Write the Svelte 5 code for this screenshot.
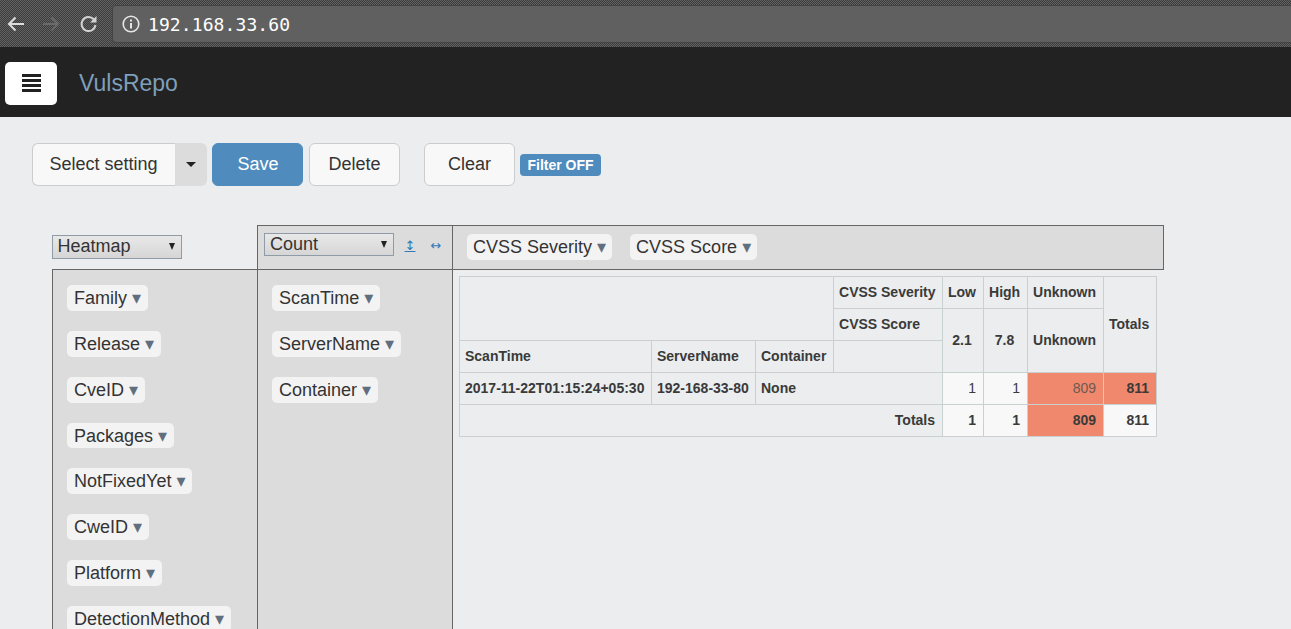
<script lang="ts">
  const unused = ['Family', 'Release', 'CveID', 'Packages', 'NotFixedYet', 'CweID', 'Platform', 'DetectionMethod'];
  const rowAttrs = ['ScanTime', 'ServerName', 'Container'];
  const colAttrs = ['CVSS Severity', 'CVSS Score'];
</script>

<div class="browser">
  <svg class="nav-icon" viewBox="0 0 20 20" width="20" height="20">
    <path d="M18 10H3M9.500 3.500 3 10l6.500 6.500" fill="none" stroke="#dedede" stroke-width="2" />
  </svg>
  <svg class="nav-icon forward" viewBox="0 0 20 20" width="20" height="20">
    <path d="M2 10h15M10.500 3.500 17 10l-6.500 6.500" fill="none" stroke="#6a6a6a" stroke-width="2" />
  </svg>
  <svg class="nav-icon reload" viewBox="0 0 20 20" width="20" height="20">
    <path d="M16.500 11a7 7 0 1 1-1.800-5.700" fill="none" stroke="#d2d2d2" stroke-width="2" />
    <path d="M17.500 2v6.500H11z" fill="#d2d2d2" />
  </svg>
  <div class="omnibox">
    <svg viewBox="0 0 18 18" width="18" height="18">
      <circle cx="9" cy="9" r="7.800" fill="none" stroke="#e6e6e6" stroke-width="1.600" />
      <path d="M8 8h2v5.500H8zM8 4.500h2v2H8z" fill="#e6e6e6" />
    </svg>
    <span class="url">192.168.33.60</span>
  </div>
</div>

<nav class="navbar">
  <button class="menu" aria-label="Menu">
    <svg viewBox="0 0 19 18" width="19" height="18">
      <path d="M0 0h19v3H0zM0 5h19v3H0zM0 10h19v3H0zM0 15h19v3H0z" fill="#222" />
    </svg>
  </button>
  <span class="brand">VulsRepo</span>
</nav>

<main>
  <div class="toolbar">
    <div class="split">
      <button class="btn setting">Select setting</button>
      <button class="caret-btn" aria-label="Open"><i class="caret"></i></button>
    </div>
    <button class="btn primary">Save</button>
    <button class="btn">Delete</button>
    <button class="btn clear">Clear</button>
    <span class="badge">Filter OFF</span>
  </div>

  <table class="pivot">
    <colgroup><col class="c1" /><col class="c2" /><col class="c3" /></colgroup>
    <tbody>
      <tr class="top">
        <td class="renderer">
          <div class="select heatmap">Heatmap<i class="tri"></i></div>
        </td>
        <td class="aggregator">
          <div class="agg-row">
            <div class="select count">Count<i class="tri"></i></div>
            <a class="order first" href="#r">↕</a>
            <a class="order" href="#c">↔</a>
          </div>
        </td>
        <td class="cols">
          <div class="col-row">
            {#each colAttrs as attr}
              <span class="chip inline">{attr} <em>▾</em></span>
            {/each}
          </div>
        </td>
      </tr>
      <tr>
        <td class="list">
          {#each unused as attr}
            <span class="chip">{attr} <em>▾</em></span>
          {/each}
        </td>
        <td class="list">
          {#each rowAttrs as attr}
            <span class="chip">{attr} <em>▾</em></span>
          {/each}
        </td>
        <td class="output">
          <table class="result">
            <colgroup>
              <col style="width:192px" /><col style="width:104px" /><col style="width:78px" />
              <col style="width:109px" /><col style="width:41px" /><col style="width:44px" />
              <col style="width:76px" /><col style="width:53px" />
            </colgroup>
            <thead>
              <tr>
                <th colspan="3" rowspan="2"></th>
                <th>CVSS Severity</th>
                <th class="mid">Low</th>
                <th class="mid">High</th>
                <th class="mid">Unknown</th>
                <th class="mid" rowspan="3">Totals</th>
              </tr>
              <tr>
                <th>CVSS Score</th>
                <th class="mid" rowspan="2">2.1</th>
                <th class="mid" rowspan="2">7.8</th>
                <th class="mid" rowspan="2">Unknown</th>
              </tr>
              <tr>
                <th>ScanTime</th>
                <th>ServerName</th>
                <th>Container</th>
                <th></th>
              </tr>
            </thead>
            <tbody>
              <tr>
                <th>2017-11-22T01:15:24+05:30</th>
                <th>192-168-33-80</th>
                <th colspan="2">None</th>
                <td>1</td>
                <td>1</td>
                <td class="hot faint">809</td>
                <td class="hot strong">811</td>
              </tr>
              <tr>
                <th class="total-label" colspan="4">Totals</th>
                <td class="strong">1</td>
                <td class="strong">1</td>
                <td class="hot strong">809</td>
                <td class="strong">811</td>
              </tr>
            </tbody>
          </table>
        </td>
      </tr>
    </tbody>
  </table>
</main>

<style>
  :global(body) {
    margin: 0;
    height: 629px;
    overflow: hidden;
    background: #ebedef;
    color: #333;
    font-family: "Liberation Sans", "DejaVu Sans", sans-serif;
  }

  .browser {
    display: flex;
    align-items: center;
    height: 47px;
    padding-left: 6px;
    box-sizing: border-box;
    background: repeating-conic-gradient(#3c3c3c 0 25%, #626262 0 50%) 0 0 / 2px 2px;
  }

  .nav-icon { flex: none; margin-right: 15px; }
  .reload { margin: 0 14px 0 3px; }

  .omnibox {
    flex: 1;
    display: flex;
    align-items: center;
    gap: 8px;
    height: 36px;
    padding-left: 9px;
    background: #606060;
    border-radius: 3px 0 0 3px;
    box-shadow: 0 0 0 1px #444;
    color: #fff;
    font: 18px "DejaVu Sans Mono", monospace;
  }

  .url {
    padding-top: 1px;
    letter-spacing: 0.1px;
  }

  .navbar {
    display: flex;
    align-items: center;
    height: 70px;
    padding-top: 2px;
    box-sizing: border-box;
    background: #222;
  }

  .menu {
    display: flex;
    align-items: center;
    justify-content: center;
    width: 52px;
    height: 43px;
    margin-left: 5px;
    padding: 0;
    border: 0;
    border-radius: 5px;
    background: #fff;
  }

  .brand {
    margin-left: 22px;
    font-size: 23px;
    color: #7f9fba;
  }

  .toolbar {
    display: flex;
    align-items: center;
    height: 43px;
    padding: 26px 0 0 32px;
  }

  .btn {
    width: 91px;
    height: 43px;
    padding: 0;
    margin-right: 6px;
    border: 1px solid #ccc;
    border-radius: 6px;
    background: #f8f8f8;
    color: #333;
    font: 18px "Liberation Sans", sans-serif;
  }

  .primary {
    padding-left: 1px;
    border-color: #4f8bbd;
    background: #4f8bbd;
    color: #fff;
  }

  .clear { margin: 0 5px 0 18px; }

  .split {
    display: flex;
    margin-right: 5px;
  }

  .setting {
    width: 143px;
    margin: 0;
    padding-right: 1px;
    border-right: 0;
    border-radius: 6px 0 0 6px;
  }

  .caret-btn {
    display: flex;
    align-items: center;
    justify-content: center;
    width: 32px;
    height: 43px;
    padding: 0;
    border: 0;
    border-radius: 0 6px 6px 0;
    background: #dcdcdc;
  }

  .caret {
    border-top: 5px solid #222;
    border-left: 5px solid transparent;
    border-right: 5px solid transparent;
  }

  .badge {
    width: 81px;
    height: 22px;
    border-radius: 4px;
    background: #4f8bbd;
    color: #fff;
    font-size: 14px;
    font-weight: 700;
    line-height: 22px;
    text-align: center;
  }

  .pivot {
    margin: 39px 0 0 52px;
    border-collapse: collapse;
    table-layout: fixed;
    width: 1111px;
    font-size: 18px;
  }

  .c1 { width: 205px; }
  .c2 { width: 195px; }
  .c3 { width: 711px; }

  .pivot > tbody > tr > td {
    padding: 0;
    vertical-align: top;
    border: 1px solid #666;
    background: #dcdcdc;
  }

  .pivot > tbody > tr.top > td { height: 44px; box-sizing: border-box; }

  .pivot > tbody > tr > td.renderer {
    border-width: 0 1px 1px 0;
    background: transparent;
    padding-top: 9px;
  }

  .pivot > tbody > tr > td.aggregator { padding: 7px 0 0 6px; }

  .pivot > tbody > tr > td.cols { padding: 8px 0 0 14px; }

  .pivot > tbody > tr > td.list { padding: 15px 0 0 14px; }

  .pivot > tbody > tr > td.output {
    padding: 6px 0 0 6px;
    border-width: 1px 0 0 1px;
    background: transparent;
  }

  .agg-row,
  .col-row {
    display: flex;
    align-items: flex-start;
  }

  .col-row { gap: 18px; }

  .select {
    position: relative;
    width: 130px;
    height: 24px;
    padding-left: 5px;
    box-sizing: border-box;
    border: 1px solid #8f9ba6;
    background: linear-gradient(#e8e8e8, #d6d6d6);
    font-size: 18px;
    line-height: 20px;
  }

  .heatmap { margin-left: -1px; }

  .count {
    flex: none;
    height: 23px;
    line-height: 20px;
  }

  .tri {
    position: absolute;
    right: 6px;
    top: 7px;
    border-top: 7px solid #222;
    border-left: 3.500px solid transparent;
    border-right: 3.500px solid transparent;
  }

  .order {
    flex: none;
    width: 26px;
    margin-top: 5px;
    color: #337ab7;
    font: 13px "DejaVu Sans", sans-serif;
    text-align: center;
    text-decoration: none;
  }

  .order.first {
    margin-left: 3px;
    text-decoration: underline;
  }

  .chip {
    display: block;
    width: fit-content;
    height: 25.860px;
    margin-bottom: 20px;
    padding: 0 7px;
    box-sizing: border-box;
    border-radius: 5px;
    background: #f3f3f3;
    line-height: 26px;
    white-space: nowrap;
  }

  .chip.inline {
    margin: 0;
    padding: 0 6px;
  }

  .chip em {
    color: #5f6f7e;
    font-style: normal;
  }

  .result {
    border-collapse: collapse;
    table-layout: fixed;
    width: 697px;
    font-size: 14px;
    line-height: 15px;
  }

  .result th,
  .result td {
    height: 32px;
    padding: 0 7px 1px 5px;
    box-sizing: border-box;
    border: 1px solid #c8d0d0;
    color: #3a3a3a;
    white-space: nowrap;
  }

  .result th {
    background: repeating-conic-gradient(#e9ebed 0 25%, #edeff1 0 50%) 0 0 / 2px 2px;
    font-weight: 700;
    text-align: left;
  }

  .result th.mid { text-align: center; }

  .result th.total-label { text-align: right; }

  .result td {
    background: #f8f8f8;
    text-align: right;
    font-weight: 400;
  }

  .result td.strong { font-weight: 700; }

  .result td.hot { background: #f0886d; }

  .result td.faint { color: #6d5a52; }
</style>
